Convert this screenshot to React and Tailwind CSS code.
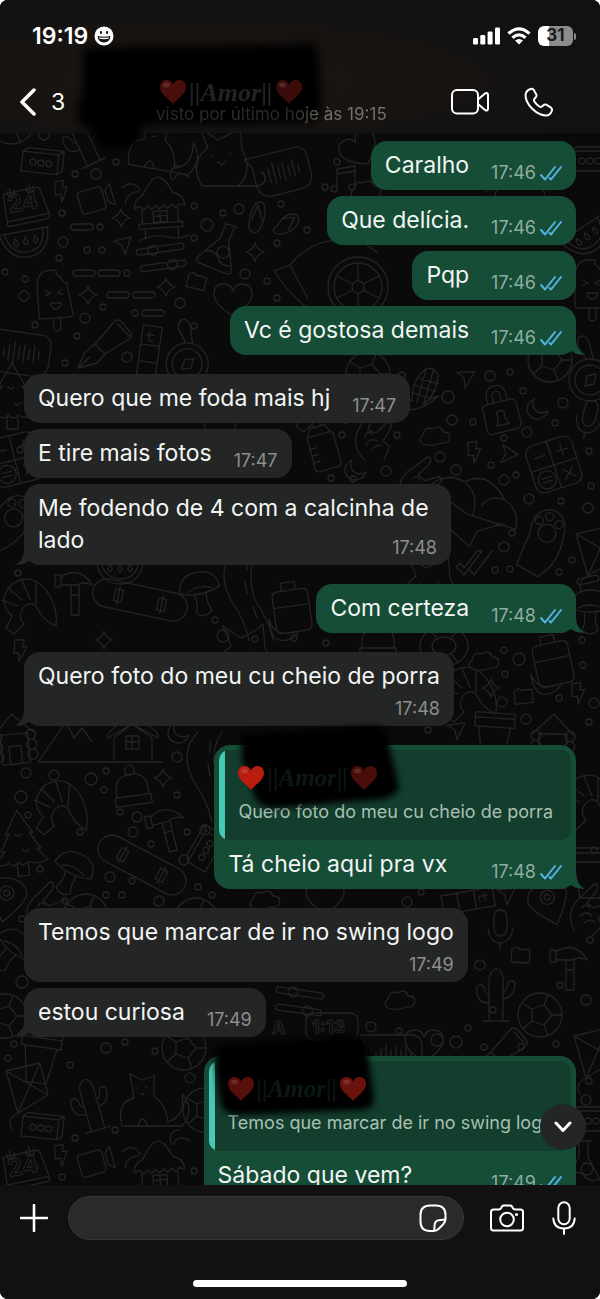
import React, { useState } from "react";

const DOODLES = {
  dot: "M-3 0a3 3 0 1 0 6 0a3 3 0 1 0 -6 0",
  ring: "M-5 0a5 5 0 1 0 10 0a5 5 0 1 0 -10 0",
  star: "M0 -9Q2 -2 9 0Q2 2 0 9Q-2 2 -9 0Q-2 -2 0 -9Z",
  bolt: "M-5 -10L4 -10L2 -3L7 -3L-1 11L-1 3L-6 3Z",
  plane: "M-9 -6L9 -8L1 9L-1 -1Z",
  dash: "M-8 -3H8A3 3 0 0 1 8 3H-8A3 3 0 0 1 -8 -3Z",
  video: "M-15 -11H5Q9 -11 9 -7V8Q9 12 5 12H-12Q-16 12 -16 8V-8Q-16 -11 -12 -11M12 -6L18 -11V11L12 6Z",
  cassette: "M-19 -9H17V11H-19ZM-19 -9L-14 -13H22V7L17 11M17 -9L22 -13M-11 1a3 3 0 1 0 6 0a3 3 0 1 0 -6 0M-3 1a3 3 0 1 0 6 0a3 3 0 1 0 -6 0M5 1a3 3 0 1 0 6 0a3 3 0 1 0 -6 0",
  calendar: "M-19 -15H15Q18 -15 18 -11L22 14Q22 18 18 18H-18Q-22 18 -21 14L-19 -15M-20 13H21M-12 -20V-11M8 -20V-11M-15 -17a4 4 0 1 0 7 0M5 -17a4 4 0 1 0 7 0",
  hut: "M-25 8Q-26 0 -16 -5Q-6 -22 0 -22Q7 -22 14 -6Q26 -2 25 8L20 6L16 10L12 6L8 10L4 6L0 10L-4 6L-8 10L-12 6L-16 10L-20 6ZM-18 10V24M18 10V24M-22 24H22V29H-22ZM-16 29V39M17 29V39M-7 12H7V23H-7ZM0 12V23M-7 17H7M-22 40Q-6 34 8 39Q18 42 28 38M14 -18Q10 -30 22 -32M16 -18Q22 -28 32 -20M-18 -10Q-24 -22 -36 -14M-20 -9Q-32 -8 -34 2",
  melon: "M-25 -12L24 -12Q22 14 0 14Q-20 14 -25 -12ZM-20 -12Q-16 9 0 9Q18 9 19 -12M-10 -6q-4 6 0 8q4 -2 0 -8M0 -6q-4 6 0 8q4 -2 0 -8M10 -6q-4 6 0 8q4 -2 0 -8",
  pop: "M-17 17V-14Q-16 -30 -4 -30L3 -30Q2 -24 7 -23Q8 -17 13 -16L17 15Q17 18 13 18H-13Q-17 18 -17 17M-3 18V29Q0 33 4 29V18M-9 -10L-4 -7L-9 -5M8 -10L3 -7L8 -5M-5 3H6Q5 9 0 9Q-4 9 -5 3",
  sliders: "M-22 -10H20A3 3 0 0 1 20 -4H-22A3 3 0 0 1 -22 -10M-20 7H20A3 3 0 0 1 20 13H-20A3 3 0 0 1 -20 7M-13 -7a5 5 0 1 0 10 0a5 5 0 1 0 -10 0M4 10a5 5 0 1 0 10 0a5 5 0 1 0 -10 0",
  flask: "M-6 -24H8M-4 -24V-8L-18 18Q-19 23 -13 23H15Q20 22 18 17L5 -8V-24M-14 10Q-4 4 2 12Q8 18 16 14M-2 4a6 6 0 1 0 12 0a6 6 0 1 0 -12 0",
  flops: "M-14 -15Q-5 -18 -6 0Q-8 16 -14 16Q-22 15 -20 0Q-19 -12 -14 -15M-14 -12L-18 4M-14 -12L-8 2M8 6Q14 -10 26 -8Q32 -2 24 7Q14 16 6 13Q3 11 8 6M24 -5L12 -2M24 -5L20 8",
  chip: "M-8 -6L-3 -8Q0 -4 3 -6L10 -5L9 8L-9 7Z",
  pen: "M-26 26L-19 10L-9 2L1 12L-7 21L-26 26ZM-9 2L10 -20Q13 -24 18 -20L26 -10Q29 -6 25 -3L1 12M-26 26L-14 15M14 -18L25 -6",
  bar: "M-9 -24H10V28H-9ZM-9 -5H10M-9 12H10M-2 -18V-10Q0 -8 3 -10M-5 -15H3",
  compass: "M-21 8a21 21 0 1 0 42 0a21 21 0 1 0 -42 0M-15 8a15 15 0 1 0 30 0a15 15 0 1 0 -30 0M-5 14L-3 4L6 2L4 12ZM-4 -13L-12 -26Q-14 -36 -7 -36Q-1 -34 0 -26L3 -14",
  heart: "M0 16Q-19 4 -19 -6Q-19 -16 -9 -16Q-2 -16 0 -9Q2 -16 9 -16Q19 -16 19 -6Q19 4 0 16Z",
  bubble: "M-30 -20H24Q32 -18 32 -8V10Q30 22 18 22H-12Q-24 20 -24 8V-10ZM-14 -2V6M-9 -6V9M-4 -10V12M1 -5V7M6 -8V10M11 -4V6M16 -9V8M21 -3V5",
  wheel: "M-30 0a30 30 0 1 0 60 0a30 30 0 1 0 -60 0M-24 0a24 24 0 1 0 48 0a24 24 0 1 0 -48 0M-6 0a6 6 0 1 0 12 0a6 6 0 1 0 -12 0M0 -24V-6M0 6V24M-21 -11L-5 -3M21 -11L5 -3M-21 11L-5 3M21 11L5 3M-34 30Q-60 20 -84 -16L-68 -22Q-40 -56 6 -44L20 -34M-68 -22L-50 12",
  lock: "M-16 -5Q-18 -9 -13 -10H13Q18 -9 18 -4V15Q17 20 12 20H-12Q-17 20 -17 15ZM-10 -10V-18Q-8 -27 0 -27Q9 -27 10 -18V-10M-4 -10V-17Q-3 -21 0 -21Q4 -21 4 -17V-10M-4 2a4 4 0 1 1 7 3L6 13H-6L-3 5Z",
  moon: "M-3 -10Q-11 -6 -10 2Q-7 11 2 10Q9 8 11 2Q3 6 -2 1Q-6 -4 -3 -10Z",
  mic: "M-6 -12Q-6 -20 0 -20Q7 -20 7 -12V-2Q6 6 0 6Q-6 5 -6 -2ZM-12 -2Q-10 13 0 13Q11 12 13 -2M0 13V19",
  cloud: "M-12 8Q-18 4 -12 -1Q-10 -10 -3 -7Q6 -12 8 -4Q17 -4 14 4Q12 8 6 7Q-2 11 -12 8Z",
  calc: "M-24 -15Q-24 -25 -14 -25H14Q24 -25 24 -15V14Q24 24 14 24H-14Q-24 24 -24 14ZM0 -25V24M-24 0H24M-17 -12H-6M7 -12H18M12 -18V-7M7 7L17 17M17 7L7 17M-20 12a9 9 0 1 0 18 0a9 9 0 1 0 -18 0M-16 10H-6M-16 14H-6",
  paw: "M-24 24Q-18 4 -14 -8Q-14 -32 4 -34Q22 -32 20 -10Q18 20 -2 34ZM-6 -10a9 9 0 1 0 18 0a9 9 0 1 0 -18 0M-10 -22a4 4 0 1 0 8 0a4 4 0 1 0 -8 0M0 -27a4 4 0 1 0 8 0a4 4 0 1 0 -8 0M10 -20a4 4 0 1 0 8 0a4 4 0 1 0 -8 0",
  clam: "M-48 -14Q-34 -30 -14 -22Q10 -36 28 -8Q44 0 42 20L-8 10ZM-14 -22Q2 -12 -2 10M28 -8Q12 -12 6 0M-32 0L-22 28L-2 42L4 26L18 20L28 16",
  ticks: "M-18 4L-10 12L8 -12M-5 6L0 12L18 -12M-18 4L-14 0L-10 5L3 -12L8 -12",
  hand: "M-16 20Q-26 0 -8 -14L4 -26Q10 -26 6 -18L-3 -7L4 -2L18 -8Q24 -6 18 0L8 8L12 16L2 26M-8 -2Q-4 -8 0 -2M-10 6Q-4 0 2 6M-6 13Q0 8 5 12",
  bottle: "M-13 -8H11Q14 -6 13 -2V24Q12 28 8 28H-10Q-14 28 -14 24ZM-13 -8L-8 -16H7L11 -8M-4 -16Q-6 -24 0 -24Q5 -23 3 -16M-14 4H-7M-14 11H-7M-14 18H-7",
  corn: "M-8 16Q-14 -4 -4 -18Q2 -24 10 -16Q14 2 4 16M-8 16Q-22 10 -24 22Q-4 34 16 4Q8 8 4 16M-9 -8H12M-10 0H12M-9 8H9M-3 -18V16M4 -20V14",
  backpack: "M-18 -14Q-18 -20 -12 -20H12Q18 -20 18 -14V16Q18 22 12 22H-12Q-18 22 -18 16ZM-18 -4H18M-8 -20V-28H6V-20M-24 6Q-22 26 4 22Q-2 30 -14 29Q-26 26 -24 6",
  life: "M-24 0a24 20 0 1 0 48 0a24 20 0 1 0 -48 0M-12 0a12 9 0 1 0 24 0a12 9 0 1 0 -24 0M-14 -16L-7 -8M14 -16L7 -8M-14 16L-7 8M14 16L7 8",
  cup: "M-20 -22H20V-8H-20ZM-16 -8L-10 28H10L16 -8M-20 -17H20",
  cabin: "M-20 -4L0 -24L20 -4M-14 -4H14V26H-14ZM-6 8H6V26H-6ZM-22 -2a5 5 0 1 0 10 0a5 5 0 1 0 -10 0M-22 8a5 5 0 1 0 10 0a5 5 0 1 0 -10 0M-22 18a5 5 0 1 0 10 0a5 5 0 1 0 -10 0M12 -2a5 5 0 1 0 10 0a5 5 0 1 0 -10 0M12 8a5 5 0 1 0 10 0a5 5 0 1 0 -10 0M12 18a5 5 0 1 0 10 0a5 5 0 1 0 -10 0",
  chalet: "M-62 20L-34 -20L-26 -4L-18 -14L-8 0M-62 20H62M14 20V-4L32 -18L52 -4V20M8 -4Q6 -12 32 -26Q60 -12 58 -4L32 -18ZM26 -6H39V7H26ZM32 -6V7M26 0H39",
  shrimp: "M26 22Q14 18 6 2Q-2 -4 -8 6Q-12 14 -6 20L-16 30L-24 24L-18 12Q-34 -2 -18 -20Q4 -34 20 -8Q28 6 26 22M-28 -4L-12 2M-22 -16L-8 -4M-8 -24L0 -4M6 -22L6 0",
  hat: "M-16 8Q-18 -14 0 -14Q18 -14 16 8M-18 8H18V17H-18ZM-5 -18a5 5 0 1 0 10 0a5 5 0 1 0 -10 0",
  hammer: "M-20 -10H-14V2H-20ZM-14 -8Q4 -20 18 0Q8 -4 2 0H-14M-4 0V30H4V0M-4 10H4",
  tree: "M0 -32L-14 -8L-10 -9L-20 8L-16 8L-26 20Q-18 24 -14 20Q-8 26 -4 20Q2 26 6 20Q14 25 26 20L16 8L20 8L10 -9L14 -8ZM-5 22V34H6V22M-4 -8q3 4 6 0M2 8q3 4 6 0",
  mushroom: "M-20 -2Q-18 -20 0 -20Q20 -20 20 -2Q0 6 -20 -2M-6 2Q-4 14 -8 20Q0 28 8 20Q4 12 6 2M-12 -2Q0 -8 12 -2",
  board: "M-34 -14H34A14 14 0 0 1 34 14H-34A14 14 0 0 1 -34 -14M-26 -6H-18V6H-26ZM18 -6H26V6H18ZM-22 -9V9M22 -9V9",
  pin: "M0 24Q-20 2 -20 -6Q-18 -20 0 -20Q18 -20 20 -6Q20 2 0 24M-7 -5a7 7 0 1 0 14 0a7 7 0 1 0 -14 0M-3 -5a3 3 0 1 0 6 0a3 3 0 1 0 -6 0",
  ball: "M-22 0a22 22 0 1 0 44 0a22 22 0 1 0 -44 0M-8 -6L4 -10L12 0L4 10L-8 6ZM-8 -6L-18 -12M4 -10L8 -20M12 0H22M4 10L8 20M-8 6L-17 14",
  fox: "M-30 34Q-36 10 -18 6L-22 -18L-10 -12L2 -16L2 4Q14 12 16 30Q34 24 30 2Q44 18 30 34ZM-16 -4h1M-6 -5h1M-11 2l3 0M-14 34Q-10 20 -4 34",
  road: "M-10 -40Q-30 -20 -14 10Q0 30 4 50M14 -40Q0 -20 10 10Q24 30 28 50M2 -30V-20M0 -8L2 4M8 16L12 28",
  cactus: "M-6 26V-16Q-4 -26 2 -26Q8 -24 8 -16V26M-6 8Q-20 8 -18 -8Q-14 -14 -10 -6Q-10 0 -6 0M8 4Q20 2 20 -12Q14 -18 12 -8Q12 -4 8 -4M-12 26H14",
  note: "M-8 10V-10L10 -13V7M-8 -5L10 -8M-14 10a3 3 0 1 0 6 0a3 3 0 1 0 -6 0M4 8a3 3 0 1 0 6 0a3 3 0 1 0 -6 0",
  cat: "M-20 24Q-34 0 -14 -14L-22 -34L-4 -22Q10 -28 18 -36L20 -12Q32 10 16 24M-10 -6h1M8 -8h1M-4 0L0 3L4 -1M-20 24H36Q48 20 40 10",
  kite: "M-16 -14L18 -22L26 10L-4 28ZM-16 -14L26 10M18 -22L-4 28M-4 28Q-16 34 -10 44",
};

const PLACED = [
  ["ball", 12, 122], ["cactus", 82, 140, -25], ["cassette", 41, 162, 6], ["fox", 164, 136, 10],
  ["cat", 222, 162], ["bubble", 278, 172, -14], ["note", 345, 179], ["heart", 360, 150, -30], ["cloud", 366, 190],
  ["calendar", 25, 205, -12], ["bolt", 61, 191, -10], ["video", 95, 199, -16], ["hut", 159, 199, -4],
  ["star", 121, 218], ["dash", 82, 227], ["flops", 270, 219, 8], ["flask", 221, 247, 22],
  ["melon", 26, 243, -10], ["plane", 123, 246, -8], ["sliders", 162, 256, -8], ["star", 255, 252],
  ["dash", 84, 273], ["dash", 109, 273], ["pop", 55, 300, -4], ["star", 88, 295], ["star", 166, 287],
  ["chip", 196, 281, 10], ["dash", 118, 295], ["dash", 144, 295], ["dash", 153, 313], ["heart", 233, 300],
  ["pen", 104, 342], ["bar", 149, 350, 8], ["compass", 188, 356, 6], ["wheel", 358, 287], ["bubble", 18, 352, 8],
  ["ball", 368, 374], ["melon", 588, 238, -34],
  ["cassette", 590, 160], ["pop", 592, 290], ["ball", 550, 360], ["compass", 590, 372], ["hut", 520, 190],
  ["corn", 424, 388, 16], ["plane", 465, 379, 6], ["lock", 500, 412, -14], ["moon", 537, 409], ["mic", 588, 420, 14],
  ["cloud", 435, 436], ["bolt", 474, 452, -6], ["plane", 506, 455, 40], ["calc", 554, 465, -18],
  ["bottle", 322, 442, -16], ["hand", 373, 436, -20], ["moon", 355, 470], ["hand", 420, 482, 8], ["clam", 476, 505, 6],
  ["paw", 543, 543, 6], ["ring", 588, 508], ["ticks", 474, 563], ["kite", 592, 548], ["calc", 15, 460, -14],
  ["shrimp", 320, 402], ["cup", 220, 430], ["tree", 12, 395], ["paw", 6, 525, 30], ["melon", 120, 570],
  ["shrimp", 30, 604], ["hammer", 75, 585], ["board", 140, 600, 12], ["mushroom", 200, 592, -12], ["road", 245, 590],
  ["backpack", 292, 610, -8], ["cat", 430, 590], ["dash", 588, 580, -12], ["mushroom", 590, 610], ["star", 104, 640],
  ["bolt", 20, 650], ["cat", 245, 660], ["hat", 378, 640], ["life", 444, 646], ["cloud", 484, 661], ["backpack", 553, 663, -12],
  ["star", 491, 688], ["chip", 523, 696, -10], ["bolt", 578, 693, -6], ["shrimp", 470, 692], ["cup", 494, 735, 4],
  ["cabin", 553, 738, 2], ["plane", 456, 731], ["cabin", 14, 738, -6], ["chalet", 100, 742], ["moon", 178, 733],
  ["road", 208, 772], ["shrimp", 62, 806, 4], ["hat", 132, 788, -8], ["star", 163, 778], ["hammer", 166, 822, -14],
  ["tree", 20, 842, -6], ["board", 142, 865, 28], ["mushroom", 72, 872, 26], ["pin", 6, 898, 8], ["hand", 46, 908],
  ["cassette", 205, 850, -60], ["ball", 86, 916], ["ball", 196, 920], ["shrimp", 592, 800],
  ["cup", 590, 870], ["cloud", 265, 900], ["heart", 325, 898], ["bar", 470, 900, 80], ["plane", 506, 896],
  ["pin", 549, 902, -20], ["mic", 500, 930], ["chip", 520, 955], ["hammer", 570, 960], ["hand", 590, 910],
  ["mushroom", 12, 950, 40], ["ball", 5, 1016], ["cup", 40, 1055, 8], ["ball", 184, 1048],
  ["sliders", 300, 1000, 8], ["cloud", 400, 1000], ["cactus", 495, 995], ["ball", 540, 1015],
  ["kite", 590, 1050], ["pen", 500, 1050], ["heart", 424, 1046], ["bubble", 390, 1055],
  ["cactus", 90, 1105, -16], ["fox", 152, 1092], ["cassette", 41, 1127, 6], ["calendar", 25, 1168, -12],
  ["bolt", 61, 1155, -10], ["video", 95, 1162, -16], ["hut", 159, 1163, -4], ["kite", 22, 1085], ["flask", 583, 1165],
  ["cassette", 588, 1120], ["ball", 205, 1110],
];

// loose circles between the drawings
const DOTS = [
  [44, 135, 5], [75, 174], [96, 174, 5], [116, 162], [62, 213], [100, 227], [87, 250], [102, 250], [63, 242, 5],
  [59, 258], [5, 272], [25, 279], [24, 296, 5], [127, 273], [103, 307], [85, 318, 5], [135, 313], [35, 325],
  [77, 336], [127, 357, 5], [65, 363], [194, 206], [223, 213], [239, 209, 5], [207, 225, 6], [281, 204], [194, 238],
  [245, 274, 5], [277, 243], [267, 281], [277, 298], [180, 303, 5], [194, 326], [337, 162], [325, 187], [307, 230],
  [402, 375], [490, 376, 5], [510, 372], [448, 397, 6], [523, 391], [563, 403, 5], [452, 420, 5], [473, 422],
  [555, 423], [527, 432, 5], [504, 438], [397, 435], [440, 457, 5], [456, 470, 5], [491, 465], [504, 480, 5],
  [516, 475], [529, 499, 5], [561, 501], [589, 451], [591, 486], [512, 533], [504, 547, 5], [572, 560],
  [495, 570], [510, 569], [559, 572], [342, 435], [353, 479], [331, 478], [386, 471, 5], [20, 450], [18, 573],
  [215, 620], [223, 636, 6], [255, 639], [294, 638], [326, 643], [504, 650], [519, 659, 6], [505, 674],
  [582, 640], [583, 665], [502, 702, 5], [526, 719, 5], [559, 698], [594, 703, 5], [589, 722], [428, 730],
  [26, 773, 5], [54, 775, 5], [91, 779, 6], [106, 771], [104, 790], [21, 797, 6], [28, 815], [120, 812],
  [137, 817, 5], [177, 795], [177, 757, 5], [80, 832], [133, 832, 5], [151, 844], [187, 832], [205, 830, 5],
  [40, 869], [110, 877, 5], [132, 881], [184, 860, 5], [198, 887], [106, 895], [122, 895], [65, 901], [159, 901, 5],
  [212, 895], [22, 919], [22, 982, 6], [14, 1044], [106, 1048, 5], [125, 1042], [155, 1051], [371, 1027, 5],
  [399, 1031], [437, 1040, 6], [456, 1042, 6], [468, 1028], [484, 1047], [521, 1047], [556, 1044], [589, 1081],
  [586, 1100, 5], [421, 892], [407, 902, 5], [493, 1010], [480, 965, 5], [560, 985], [586, 1000, 5], [62, 1177],
  [70, 1065], [115, 1130], [8, 1058], [194, 1171], [190, 1078, 5], [75, 1138], [594, 850], [590, 940],
];

function Wallpaper() {
  return (
    <svg
      aria-hidden="true"
      viewBox="0 133 600 1052"
      preserveAspectRatio="xMidYMin slice"
      className="absolute inset-0 h-full w-full fill-none stroke-[#242424]"
      strokeWidth="1.3"
      strokeLinejoin="round"
      strokeLinecap="round"
    >
      {PLACED.map(([name, x, y, r = 0], i) => (
        <path key={i} d={DOODLES[name]} transform={`translate(${x} ${y}) rotate(${r})`} />
      ))}
      {DOTS.map(([x, y, r = 3], i) => (
        <circle key={i} cx={x} cy={y} r={r} />
      ))}
      <text x="9" y="213" fontSize="24" fontWeight="700" strokeWidth="1" transform="rotate(-10 9 213)">24</text>
      <text x="9" y="1177" fontSize="24" fontWeight="700" strokeWidth="1" transform="rotate(-10 9 1177)">24</text>
      <text x="312" y="1033" fontSize="18" fontWeight="700" strokeWidth="1">1:13</text>
      <text x="272" y="1034" fontSize="18" fontWeight="700" strokeWidth="1">A</text>
      <rect x="306" y="1013" width="52" height="27" rx="8" />
    </svg>
  );
}

function Heart({ className }) {
  return (
    <svg aria-hidden="true" viewBox="0 0 26 24" className={`h-6 w-[26px] shrink-0 ${className}`}>
      <path
        d="M13 24C9 19 0 14 0 7C0 2.500 3 0 6.500 0C9.500 0 12 1.800 13 4.500C14 1.800 16.500 0 19.500 0C23 0 26 2.500 26 7C26 14 17 19 13 24Z"
        fill="currentColor"
      />
      <ellipse cx="6.500" cy="5" rx="3.500" ry="2.500" fill="#fff" opacity=".12" />
    </svg>
  );
}

function Ticks() {
  return (
    <svg
      aria-label="Lida"
      role="img"
      viewBox="0 0 22 16"
      className="h-4 w-[22px] fill-none stroke-[#53b4e4]"
      strokeWidth="2"
      strokeLinecap="round"
      strokeLinejoin="round"
    >
      <path d="M1 10L5 14.500L15 2M9.500 13L11 14.500L21 2" />
    </svg>
  );
}

function Tail({ sent }) {
  return sent ? (
    <svg aria-hidden="true" viewBox="0 0 24 24" className="absolute -right-[9px] bottom-0 h-6 w-6 fill-[#154d37]">
      <path d="M15 0V8C15 15 18 21 24 23.500C19 24.500 14 23 10 20L2 24V0Z" />
    </svg>
  ) : (
    <svg aria-hidden="true" viewBox="0 0 24 24" className="absolute -left-[9px] bottom-0 h-6 w-6 fill-[#242626]">
      <path d="M9 0V8C9 15 6 21 0 23.500C5 24.500 10 23 14 20L22 24V0Z" />
    </svg>
  );
}

function Time({ message, className = "" }) {
  return (
    <span
      className={`flex shrink-0 items-center gap-1 text-[18px] leading-4 ${
        message.sent ? "text-[#8fae9f]" : "text-[#8d8e8e]"
      } ${className}`}
    >
      <time>{message.time}</time>
      {message.sent && <Ticks />}
    </span>
  );
}

function Quote({ quote }) {
  return (
    <div className="px-[5px] pt-[5px]">
      <blockquote className="relative overflow-hidden rounded-[10px] bg-[#133d2c] py-3 pr-[18px] pl-[19px]">
        <span className="absolute inset-y-0 left-0 w-[6px] bg-[#48c9b5]" />
        <div className="relative z-20 flex h-8 items-center gap-[3px]">
          <Heart className={quote.hearts[0]} />
          <span className="font-['Liberation_Serif',serif] text-[25px] font-bold text-[#0b1815] italic">||Amor||</span>
          <Heart className={quote.hearts[1]} />
        </div>
        <p className="mt-[2px] truncate text-[18px] leading-8 text-[#a9c0b4]">{quote.text}</p>
      </blockquote>
      <svg
        aria-hidden="true"
        viewBox="0 0 200 80"
        className="absolute top-0 left-0 z-10 h-20 w-[200px] overflow-visible blur-[3px]"
      >
        <path d={quote.scribble} />
      </svg>
    </div>
  );
}

const groups = [
  [
    { text: "Caralho", time: "17:46", sent: true },
    { text: "Que delícia.", time: "17:46", sent: true },
    { text: "Pqp", time: "17:46", sent: true },
    { text: "Vc é gostosa demais", time: "17:46", sent: true },
  ],
  [
    { text: "Quero que me foda mais hj", time: "17:47" },
    { text: "E tire mais fotos", time: "17:47" },
    { text: "Me fodendo de 4 com a calcinha de lado", time: "17:48", layout: "wrap" },
  ],
  [{ text: "Com certeza", time: "17:48", sent: true }],
  [{ text: "Quero foto do meu cu cheio de porra", time: "17:48", layout: "below" }],
  [
    {
      text: "Tá cheio aqui pra vx",
      time: "17:48",
      sent: true,
      quote: {
        text: "Quero foto do meu cu cheio de porra",
        hearts: ["text-[#b81d0e]", "text-[#4a0d09]"],
        scribble:
          "M27 -10L154 -19Q168 -22 172 -12L185 42Q184 50 170 54L60 63Q44 62 40 50L28 15Z",
      },
    },
  ],
  [
    { text: "Temos que marcar de ir no swing logo", time: "17:49", layout: "below" },
    { text: "estou curiosa", time: "17:49" },
  ],
  [
    {
      text: "Sábado que vem?",
      time: "17:49",
      sent: true,
      quote: {
        text: "Temos que marcar de ir no swing logo",
        hearts: ["text-[#560f0a]", "text-[#6b120c]"],
        scribble:
          "M12 -10L136 -20Q160 -22 163 -10L170 44Q170 53 156 54L32 59Q18 57 16 44L11 8Z",
      },
    },
  ],
];

function MessageBody({ message }) {
  if (message.layout === "wrap") {
    return (
      <div className="flow-root px-[14px] pt-2 pb-[9px]">
        <p className="w-[399px] max-w-full">
          {message.text}
          <Time message={message} className="float-right mt-4" />
        </p>
      </div>
    );
  }
  if (message.layout === "below") {
    return (
      <div className="flex flex-col gap-[9px] px-[14px] pt-2 pb-[9px]">
        <p>{message.text}</p>
        <Time message={message} className="self-end" />
      </div>
    );
  }
  return (
    <div className="flex items-end justify-between gap-[22px] px-[14px] pt-2 pb-[9px]">
      <p>{message.text}</p>
      <Time message={message} />
    </div>
  );
}

function Message({ message, last }) {
  const { sent, quote } = message;
  return (
    <li
      className={`relative rounded-[16px] text-[23px] leading-8 text-[#f3f5f4] ${
        sent ? "self-end bg-[#154d37]" : "self-start bg-[#242626]"
      }`}
    >
      {last && <Tail sent={sent} />}
      {quote && <Quote quote={quote} />}
      <div className="relative">
        <MessageBody message={message} />
      </div>
    </li>
  );
}

function StatusBar() {
  return (
    <div className="flex h-[72px] items-center justify-between pr-6 pl-8">
      <div className="flex items-center gap-[6px] text-[23px] font-semibold">
        <span>19:19</span>
        <svg aria-hidden="true" viewBox="0 0 20 20" className="h-5 w-5">
          <circle cx="10" cy="10" r="9.500" fill="#fff" />
          <ellipse cx="7" cy="6.500" rx="1" ry="1.700" fill="#16130f" />
          <ellipse cx="13" cy="6.500" rx="1" ry="1.700" fill="#16130f" />
          <path d="M3.500 10Q10 11.500 16.500 10Q16 16 10 16.500Q4 16 3.500 10Z" fill="#16130f" />
          <path d="M5 11.200Q10 12.500 15 11.200L14.500 12.800Q10 13.600 5.500 12.800Z" fill="#fff" />
        </svg>
      </div>
      <div className="flex items-center gap-[7px]">
        <svg aria-hidden="true" viewBox="0 0 27 18" className="h-[18px] w-[27px] fill-white">
          <rect x="0" y="11" width="5" height="6.500" rx="1.300" />
          <rect x="7.300" y="8" width="5" height="9.500" rx="1.300" />
          <rect x="14.600" y="4.500" width="5" height="13" rx="1.300" />
          <rect x="22" y="0.500" width="5" height="17" rx="1.300" />
        </svg>
        <svg aria-hidden="true" viewBox="0 0 24 18" className="h-[18px] w-6 fill-none stroke-white" strokeWidth="3.200">
          <path d="M1.500 6.600Q12 -3 22.500 6.600M5.500 10.700Q12 4.900 18.500 10.700" />
          <path d="M12 17.500L8 13.500Q12 10.300 16 13.500Z" fill="#fff" stroke="none" />
        </svg>
        <div className="flex items-center gap-px">
          <span className="flex h-5 w-[35px] items-center justify-center rounded-[6px] bg-linear-to-r from-white from-31% to-[#8c8c8c] to-31% text-[17px] font-bold text-[#1a1a1a]">
            31
          </span>
          <span className="h-[7px] w-[2px] rounded-r-full bg-[#8c8c8c]" />
        </div>
      </div>
    </div>
  );
}

export default function App() {
  const [draft, setDraft] = useState("");

  return (
    <div className="h-screen bg-white font-['Inter','Liberation_Sans',sans-serif]">
      <div className="flex h-full flex-col overflow-hidden rounded-[8px] bg-[#0a0a0a] text-white">
        <header className="relative z-10 h-[133px] shrink-0 bg-[#111010] bg-radial-[at_35%_60%] from-[#1c1611] to-[#111111] to-80%">
          <svg
            aria-hidden="true"
            viewBox="0 0 340 160"
            className="absolute top-0 left-0 h-40 w-[340px] overflow-visible blur-[4px]"
          >
            <path d="M84 48L316 44Q322 80 320 112Q318 124 300 123L142 125Q138 150 115 150Q94 148 92 130Q76 125 77 110L83 90Z" />
          </svg>
          <div className="relative">
            <StatusBar />
            <div className="flex h-[60px] items-center pr-[46px] pl-5">
              <button type="button" aria-label="Voltar" className="flex w-[136px] items-center gap-[15px] text-[23px]">
                <svg
                  aria-hidden="true"
                  viewBox="0 0 16 28"
                  className="h-7 w-4 fill-none stroke-white"
                  strokeWidth="3.500"
                  strokeLinecap="round"
                  strokeLinejoin="round"
                >
                  <path d="M14 2L2 14L14 26" />
                </svg>
                3
              </button>
              <div className="flex-1">
                <h1 className="flex h-6 items-center gap-[3px] pl-1 font-['Liberation_Serif',serif] text-[26px] font-bold text-[#242323] italic">
                  <Heart className="text-[#4a0e0a]" />
                  ||Amor||
                  <Heart className="text-[#3a0b08]" />
                </h1>
                <p className="w-max bg-linear-to-r from-[#2d2a28] from-60% to-[#77726c] to-72% bg-clip-text text-[17px] leading-5 text-transparent">
                  visto por último hoje às 19:15
                </p>
              </div>
              <div className="flex items-center gap-[35px]">
                <button type="button" aria-label="Chamada de vídeo">
                  <svg
                    aria-hidden="true"
                    viewBox="0 0 38 26"
                    className="h-[26px] w-[38px] fill-none stroke-white"
                    strokeWidth="2"
                    strokeLinejoin="round"
                  >
                    <rect x="1" y="1" width="26" height="23.500" rx="5" />
                    <path d="M27 10.500L34 4.500Q37 3 37 6V19.500Q37 22.500 34 21L27 15Z" />
                  </svg>
                </button>
                <button type="button" aria-label="Ligar">
                  <svg
                    aria-hidden="true"
                    viewBox="0 0 30 30"
                    className="h-[30px] w-[30px] fill-none stroke-white"
                    strokeWidth="2"
                    strokeLinejoin="round"
                  >
                    <path d="M7.500 1.700Q9 1.500 9.800 3L12.300 7.500Q13 9 12 10L10.300 12Q9.500 13 10.200 14.200Q12.200 17.500 15.700 19.700Q17 20.400 17.900 19.500L19.800 17.900Q21 17 22.300 17.700L27 20.700Q28.600 21.800 28 23.200Q26.500 28.700 21.500 28.500Q14.500 28 8 21.500Q1.500 15 1.500 8Q1.800 3 7.500 1.700Z" />
                  </svg>
                </button>
              </div>
            </div>
          </div>
        </header>

        <main className="relative min-h-0 flex-1 overflow-hidden">
          <Wallpaper />
          <div className="relative flex flex-col gap-[19px] px-6 pt-2">
            {groups.map((messages, i) => (
              <ul key={i} className="flex flex-col gap-[6px]">
                {messages.map((message, j) => (
                  <Message
                    key={j}
                    message={message}
                    last={j === messages.length - 1}
                  />
                ))}
              </ul>
            ))}
          </div>
          <button
            type="button"
            aria-label="Ir para o fim"
            className="absolute right-[14px] bottom-[35px] z-30 flex h-[46px] w-[46px] items-center justify-center rounded-full bg-[#242626]"
          >
            <svg
              aria-hidden="true"
              viewBox="0 0 18 12"
              className="h-3 w-[18px] fill-none stroke-white"
              strokeWidth="3"
              strokeLinecap="round"
              strokeLinejoin="round"
            >
              <path d="M2 2L9 9.500L16 2" />
            </svg>
          </button>
        </main>

        <footer className="relative z-10 flex h-[114px] shrink-0 flex-col bg-[#111111] pt-[11px]">
          <div className="flex items-center pr-6 pl-5">
            <button type="button" aria-label="Anexar" className="mr-5">
              <svg
                aria-hidden="true"
                viewBox="0 0 28 28"
                className="h-7 w-7 stroke-white"
                strokeWidth="2.600"
                strokeLinecap="round"
              >
                <path d="M14 1V27M1 14H27" />
              </svg>
            </button>
            <div className="flex h-11 min-w-0 flex-1 items-center rounded-full border border-[#383838] bg-[#2a2a2a] pr-4 pl-5">
              <input
                type="text"
                aria-label="Mensagem"
                value={draft}
                onChange={(e) => setDraft(e.target.value)}
                className="min-w-0 flex-1 bg-transparent text-[23px] outline-none"
              />
              <button type="button" aria-label="Figurinhas">
                <svg
                  aria-hidden="true"
                  viewBox="0 0 28 28"
                  className="h-7 w-7 fill-none stroke-white"
                  strokeWidth="2"
                  strokeLinejoin="round"
                >
                  <path d="M15 27H11Q1.500 27 1.500 17.500V11Q1.500 1.500 11 1.500H17Q26.500 1.500 26.500 11V15Q26.500 18 24 20.500L20 24.500Q17.500 27 15 27ZM15 27Q15.500 25.500 15.500 22Q15.500 16 21.500 16Q26 16 26.500 14.500" />
                </svg>
              </button>
            </div>
            <button type="button" aria-label="Câmera" className="ml-[26px]">
              <svg
                aria-hidden="true"
                viewBox="0 0 34 28"
                className="h-7 w-[34px] fill-none stroke-white"
                strokeWidth="2"
                strokeLinejoin="round"
              >
                <path d="M3.500 5.500H9Q10.300 5.500 11 4.200L12 2.500Q12.600 1.500 14 1.500H20Q21.400 1.500 22 2.500L23 4.200Q23.700 5.500 25 5.500H30.500Q33 5.500 33 8V24Q33 26.500 30.500 26.500H3.500Q1 26.500 1 24V8Q1 5.500 3.500 5.500Z" />
                <circle cx="17" cy="15.500" r="6.800" />
                <circle cx="26.500" cy="10.500" r="1.600" fill="#fff" stroke="none" />
              </svg>
            </button>
            <button type="button" aria-label="Gravar áudio" className="ml-7">
              <svg
                aria-hidden="true"
                viewBox="0 0 24 34"
                className="h-[34px] w-6 fill-none stroke-white"
                strokeWidth="2"
                strokeLinecap="round"
              >
                <rect x="6.300" y="1.300" width="11.400" height="22" rx="5.700" />
                <path d="M1.300 17.500Q2 27.500 12 27.500Q22 27.500 22.700 17.500M12 27.500V33" />
              </svg>
            </button>
          </div>
          <div className="mx-auto mt-auto mb-3 h-[7px] w-[214px] rounded-full bg-white" />
        </footer>
      </div>
    </div>
  );
}
